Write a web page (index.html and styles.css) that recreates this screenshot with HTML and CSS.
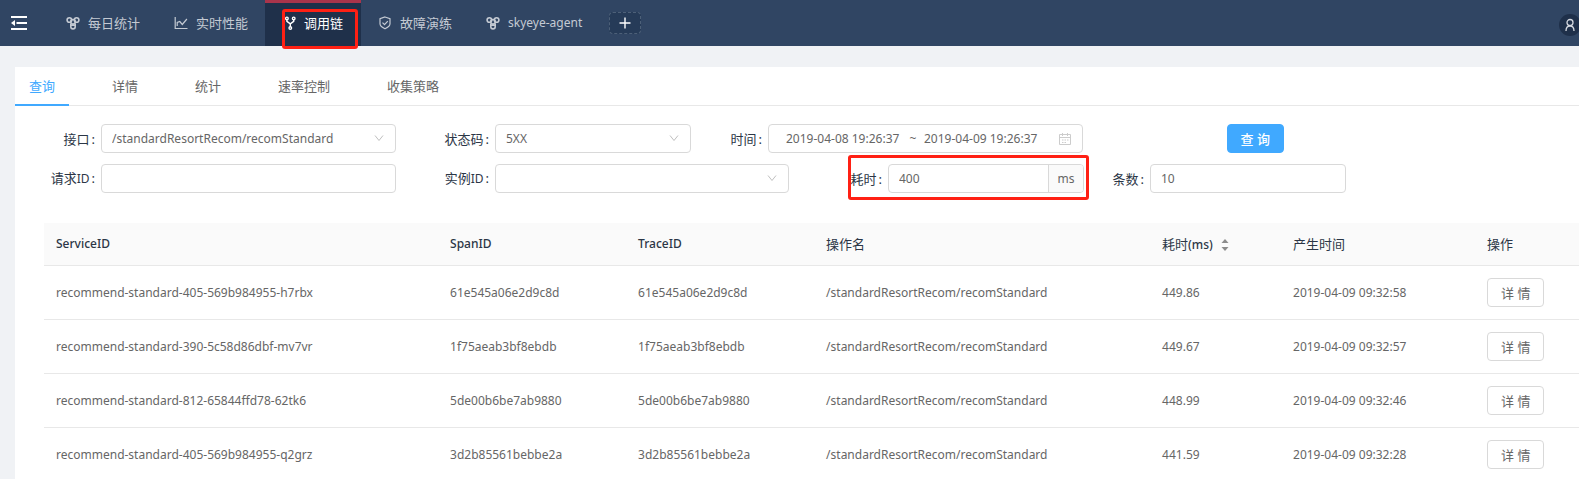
FILE: index.html
```html
<!DOCTYPE html>
<html lang="zh-CN">
<head>
<meta charset="utf-8">
<meta name="viewport" content="width=device-width, initial-scale=1">
<title>调用链</title>
<link rel="stylesheet" href="styles.css">
</head>
<body>
<svg class="defs" aria-hidden="true">
  <symbol id="i-cluster" viewBox="0 0 14 14"><g fill="none" stroke="currentColor" stroke-width="1.6"><circle cx="3.4" cy="4" r="2.3"/><circle cx="10.6" cy="4" r="2.3"/><circle cx="7" cy="5.8" r="2.3"/><path d="M4.8 7.5v3.2a2.2 2.2 0 0 0 4.4 0V7.5M4.8 9.3h4.4"/></g></symbol>
  <symbol id="i-chart" viewBox="0 0 14 14"><path d="M1.2 1v11.5h12.3M3.2 10V6.500l2.600-1 2.500 3 4.600-5.500" fill="none" stroke="currentColor" stroke-width="1.2"/></symbol>
  <symbol id="i-fork" viewBox="0 0 14 14"><g fill="none" stroke="currentColor" stroke-width="1.4"><circle cx="4.900" cy="2.4" r="1.3"/><circle cx="11.700" cy="2.4" r="1.3"/><circle cx="8.300" cy="12" r="1.3"/><path d="M4.900 3.700v1.700l3.400 2.500 3.400-2.500V3.700M8.300 7.800v2.900"/></g></symbol>
  <symbol id="i-shield" viewBox="0 0 14 14"><path d="M7 1l5 1.6v5.2c0 2.3-2 3.6-5 5-3-1.4-5-2.7-5-5V2.6zM4.5 6.6l2 2 3.3-3.5" fill="none" stroke="currentColor" stroke-width="1.2"/></symbol>
  <symbol id="i-down" viewBox="0 0 10 10"><path d="M1 2.5l4 5 4-5" fill="none" stroke="currentColor"/></symbol>
</svg>

<header class="topbar">
  <button class="fold" type="button" aria-label="收起菜单">
    <svg width="18" height="16" viewBox="0 0 18 16"><path d="M1 2h16M6.5 8H17M1 14h16" stroke="#fff" stroke-width="2"/><path d="M1 8l4-3v6z" fill="#fff"/></svg>
  </button>
  <nav class="nav">
    <a class="nav-item" href="#"><svg class="ico"><use href="#i-cluster"/></svg>每日统计</a>
    <a class="nav-item" href="#"><svg class="ico"><use href="#i-chart"/></svg>实时性能</a>
    <a class="nav-item active" href="#"><svg class="ico"><use href="#i-fork"/></svg>调用链<span class="mark mark-nav"></span></a>
    <a class="nav-item" href="#"><svg class="ico"><use href="#i-shield"/></svg>故障演练</a>
    <a class="nav-item latin" href="#"><svg class="ico"><use href="#i-cluster"/></svg>skyeye-agent</a>
  </nav>
  <button class="add" type="button" aria-label="新增"><svg width="12" height="12" viewBox="0 0 12 12"><path d="M6 .5v11M.5 6h11" stroke="#fff" stroke-width="1.4"/></svg></button>
  <button class="avatar" type="button" aria-label="用户"><svg width="12" height="14" viewBox="0 0 12 14"><g fill="none" stroke="#d5d9e0" stroke-width="1.3"><circle cx="6" cy="4.5" r="3"/><path d="M2 13c0-3 1.5-5 4-5s4 2 4 5"/></g></svg></button>
</header>

<main class="card">
  <div class="tabs" role="tablist">
    <button class="tab selected" role="tab" aria-selected="true" type="button">查询</button>
    <button class="tab" role="tab" type="button">详情</button>
    <button class="tab" role="tab" type="button">统计</button>
    <button class="tab" role="tab" type="button">速率控制</button>
    <button class="tab" role="tab" type="button">收集策略</button>
  </div>

  <form class="filters">
    <div class="row row-a">
      <div class="field">
        <label for="api">接口<i>:</i></label>
        <div class="box"><select id="api"><option>/standardResortRecom/recomStandard</option></select><svg class="arrow"><use href="#i-down"/></svg></div>
      </div>
      <div class="field wide-label">
        <label for="code">状态码<i>:</i></label>
        <div class="box"><select id="code"><option>5XX</option></select><svg class="arrow"><use href="#i-down"/></svg></div>
      </div>
      <div class="field time-label">
        <label for="from">时间<i>:</i></label>
        <div class="box range">
          <input id="from" type="text" value="2019-04-08 19:26:37">
          <span>~</span>
          <input type="text" aria-label="结束时间" value="2019-04-09 19:26:37">
          <svg class="cal" viewBox="0 0 12 12"><path d="M.5 1.5h11v10H.5zM.5 4.5h11M3.5 0v3M8.5 0v3M3 7h1.5M5.500 7H7M8 7h1.5M3 9.5h1.5M5.5 9.5H7" fill="none" stroke="currentColor"/></svg>
        </div>
      </div>
      <div class="submit"><button class="primary" type="button">查 询</button></div>
    </div>
    <div class="row row-b">
      <div class="field">
        <label for="req">请求<span class="latin">ID</span><i>:</i></label>
        <div class="box"><input id="req" type="text"></div>
      </div>
      <div class="field wide-label">
        <label for="inst">实例<span class="latin">ID</span><i>:</i></label>
        <div class="box"><select id="inst"><option></option></select><svg class="arrow"><use href="#i-down"/></svg></div>
      </div>
      <div class="field wide-label">
        <label for="cost">耗时<i>:</i></label>
        <div class="box"><input id="cost" type="text" value="400"><span class="unit">ms</span></div>
        <span class="mark mark-cost"></span>
      </div>
      <div class="field count-label">
        <label for="count">条数<i>:</i></label>
        <div class="box"><input id="count" type="text" value="10"></div>
      </div>
    </div>
  </form>

  <table class="grid">
    <colgroup><col class="c-service"><col class="c-id"><col class="c-id"><col class="c-op"><col class="c-cost"><col class="c-time"><col></colgroup>
    <thead>
      <tr><th class="latin">ServiceID</th><th class="latin">SpanID</th><th class="latin">TraceID</th><th>操作名</th><th>耗时<span class="latin">(ms)</span><svg class="sort" viewBox="0 0 8 14"><path d="M4 1l3.5 4h-7zM4 13l3.5-4h-7z" fill="#8c8c8c"/></svg></th><th>产生时间</th><th>操作</th></tr>
    </thead>
    <tbody>
      <tr><td>recommend-standard-405-569b984955-h7rbx</td><td>61e545a06e2d9c8d</td><td>61e545a06e2d9c8d</td><td>/standardResortRecom/recomStandard</td><td>449.86</td><td>2019-04-09 09:32:58</td><td><button class="detail" type="button">详 情</button></td></tr>
      <tr><td>recommend-standard-390-5c58d86dbf-mv7vr</td><td>1f75aeab3bf8ebdb</td><td>1f75aeab3bf8ebdb</td><td>/standardResortRecom/recomStandard</td><td>449.67</td><td>2019-04-09 09:32:57</td><td><button class="detail" type="button">详 情</button></td></tr>
      <tr><td>recommend-standard-812-65844ffd78-62tk6</td><td>5de00b6be7ab9880</td><td>5de00b6be7ab9880</td><td>/standardResortRecom/recomStandard</td><td>448.99</td><td>2019-04-09 09:32:46</td><td><button class="detail" type="button">详 情</button></td></tr>
      <tr><td>recommend-standard-405-569b984955-q2grz</td><td>3d2b85561bebbe2a</td><td>3d2b85561bebbe2a</td><td>/standardResortRecom/recomStandard</td><td>441.59</td><td>2019-04-09 09:32:28</td><td><button class="detail" type="button">详 情</button></td></tr>
    </tbody>
  </table>
</main>
</body>
</html>
```
FILE: styles.css
```css
* { box-sizing: border-box; }
body {
  margin: 0;
  background: #f0f2f5;
  color: #666;
  font: 13px/20px "Noto Sans", "Noto Sans CJK SC", sans-serif;
  overflow: hidden;
}
button, input, select { font: inherit; color: inherit; margin: 0; }
button { cursor: pointer; }
.defs { display: none; }

.topbar { display: flex; align-items: center; height: 46px; background: #304563; }
.fold { width: 49px; padding: 0 0 0 10px; border: 0; background: none; text-align: left; line-height: 0; }
.nav { display: flex; height: 100%; }
.nav-item {
  position: relative;
  display: flex;
  align-items: center;
  gap: 8px;
  padding: 0 17px;
  color: #c4cad3;
  text-decoration: none;
  white-space: nowrap;
}
.nav-item.active { padding-right: 18px; background: #1f304a; color: #fff; box-shadow: inset 0 3px #a9344b; }
.ico { width: 14px; height: 14px; }
.add {
  width: 32px;
  height: 22px;
  margin-left: 10px;
  padding: 0;
  border: 1px dashed #4d6078;
  border-radius: 4px;
  background: #263b58;
  line-height: 0;
}
.avatar {
  width: 22px;
  height: 22px;
  margin: 4px -2px 0 auto;
  padding: 0;
  border: 0;
  border-radius: 50%;
  background: #1f304a;
  line-height: 0;
}

.mark { position: absolute; border: 3px solid #ff2014; border-radius: 3px; pointer-events: none; z-index: 1; }
.mark-nav { left: 17px; right: 3px; top: 9px; bottom: -3px; }
.mark-cost { left: 59px; right: -5px; top: -9px; bottom: -7px; }

.card { margin: 21px 0 0 15px; background: #fff; }
.tabs { display: flex; gap: 29px; height: 39px; border-bottom: 1px solid #e8e8e8; }
.tab { height: 39px; padding: 0 14px; border: 0; border-bottom: 2px solid transparent; background: none; }
.tab.selected { color: #40a9ff; border-color: #40a9ff; }

.filters { display: grid; gap: 11px; padding: 18px 0 30px 29px; }
.row { display: grid; }
.row-a { grid-template-columns: 352fr 295fr 392fr 201fr 295fr; }
.row-b { grid-template-columns: 352fr 393fr 295fr 262fr 233fr; }
.field { position: relative; display: grid; grid-template-columns: 57px minmax(0, 1fr); align-items: center; }
.wide-label { grid-template-columns: 99px minmax(0, 1fr); }
.time-label { grid-template-columns: 77px minmax(0, 1fr); }
.count-label { grid-template-columns: 66px minmax(0, 1fr); }
.field label { color: #2b3646; text-align: right; white-space: nowrap; }
.field i { margin: 0 6px 0 2px; font-style: normal; }
.latin, .box, .grid td { font-size: 12px; }
.box {
  position: relative;
  display: flex;
  align-items: center;
  height: 29px;
  border: 1px solid #d9d9d9;
  border-radius: 4px;
  background: #fff;
}
.box input, .box select {
  flex: 1;
  min-width: 0;
  height: 100%;
  padding: 0 10px;
  border: 0;
  outline: 0;
  background: none;
  appearance: none;
}
.arrow { position: absolute; right: 11px; top: 8px; width: 10px; height: 10px; color: #bfbfbf; pointer-events: none; }
.range { padding: 0 11px 0 17px; }
.range span { width: 22px; text-align: center; }
.box.range input { flex: 0 1 116px; padding: 0; }
.cal { width: 12px; height: 12px; margin-left: auto; color: #ccc; }
.unit { display: grid; place-items: center; width: 35px; height: 100%; border-left: 1px solid #d9d9d9; border-radius: 0 3px 3px 0; background: #fafafa; }
.submit { display: flex; justify-content: flex-end; }
.primary, .detail { height: 29px; padding: 0 13px; border: 1px solid #d9d9d9; border-radius: 4px; background: #fff; font-size: 13px; white-space: nowrap; }
.primary { border-color: #40a9ff; background: #40a9ff; color: #fff; font-weight: 500; }

.grid { width: calc(100% - 29px); margin-left: 29px; border-collapse: separate; border-spacing: 0; table-layout: fixed; }
.c-service { width: 25.67%; }
.c-id { width: 12.25%; }
.c-op { width: 21.89%; }
.c-cost { width: 8.53%; }
.c-time { width: 12.64%; }
.grid th, .grid td { padding: 0 12px; border-bottom: 1px solid #e8e8e8; text-align: left; white-space: nowrap; }
.grid th { height: 43px; background: #fafafa; color: #2b3646; font-weight: 400; }
.grid .latin { font-weight: 500; }
.grid td { height: 54px; }
.sort { width: 8px; height: 14px; margin-left: 8px; vertical-align: -3px; }
```
